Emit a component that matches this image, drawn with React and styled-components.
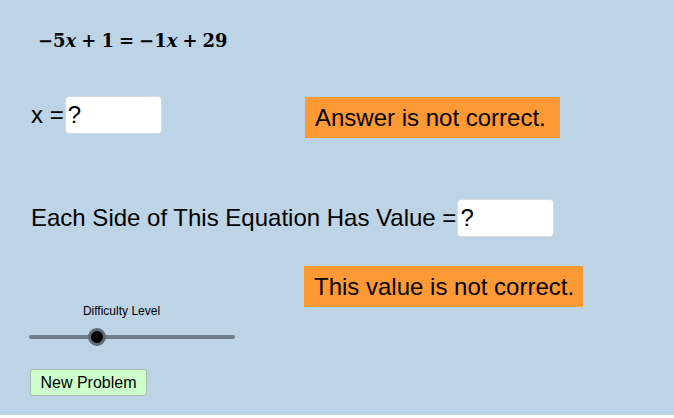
import React from 'react'
import styled, { createGlobalStyle } from 'styled-components'

const Global = createGlobalStyle`
  body {
    margin: 0;
    background: #fff;
    font-family: 'Liberation Sans', Arial, sans-serif;
  }
`

const Board = styled.div`
  width: 674px;
  height: 415px;
  box-sizing: border-box;
  background: #bdd3e6;
  padding: 30px 0 0 29px;
  color: #000;
  overflow: hidden;
`

const Equation = styled.div`
  font-family: 'DejaVu Serif', 'Liberation Serif', serif;
  font-weight: bold;
  font-size: 18px;
  height: 22px;
  line-height: 22px;
  margin-left: 9px;
  i {
    font-style: italic;
  }
  .op {
    margin: 0 5px;
  }
`

const Row = styled.div`
  display: flex;
  align-items: flex-start;
  margin-top: ${p => p.top}px;
  font-size: 24px;
`

const Label = styled.span`
  margin-left: 2px;
  width: ${p => (p.w ? p.w + 'px' : 'auto')};
  height: 38px;
  display: flex;
  align-items: center;
  white-space: nowrap;
`

const Field = styled.div`
  width: 97px;
  height: 38px;
  box-sizing: border-box;
  background: #fff;
  border: 1px solid #d3dbe3;
  border-radius: 4px;
  padding-left: 2px;
  display: flex;
  align-items: center;
  margin-left: 1px;
`

const Feedback = styled.div`
  background: #ff9933;
  width: ${p => p.w}px;
  height: 41px;
  box-sizing: border-box;
  padding: 0 0 0 10px;
  display: flex;
  align-items: center;
  white-space: nowrap;
  margin-top: ${p => p.drop || 0}px;
  margin-left: ${p => p.left || 0}px;
  font-size: 24px;
`

const SliderBox = styled.div`
  margin-top: ${p => p.top}px;
  width: 206px;
`

const SliderLabel = styled.div`
  font-size: 12px;
  line-height: 13px;
  text-align: center;
  width: 185px;
`

const Track = styled.div`
  position: relative;
  margin-top: 17px;
  height: 4px;
  border-radius: 2px;
  background: #6e7d89;
`

const Thumb = styled.div`
  position: absolute;
  top: 50%;
  width: 12px;
  height: 12px;
  border-radius: 50%;
  background: #000;
  border: 3px solid #5e6a74;
  transform: translate(-50%, -50%);
`

const Button = styled.button`
  display: block;
  margin-top: 30px;
  margin-left: 1px;
  width: 117px;
  height: 27px;
  background: #ccffcc;
  border: 1px solid #a7b9a7;
  border-radius: 3px;
  font-family: 'Liberation Sans', Arial, sans-serif;
  font-size: 16px;
  color: #000;
  padding: 0;
`

export default function App() {
  const level = 0.33
  return (
    <>
      <Global />
      <Board>
        <Equation>
          −5<i>x</i><span className="op">+</span>1<span className="op">=</span>−1<i>x</i>
          <span className="op">+</span>29
        </Equation>
        <Row top={44}>
          <Label w={274}>
            x =<Field>?</Field>
          </Label>
          <Feedback w={255} drop={1}>Answer is not correct.</Feedback>
        </Row>
        <Row top={61}>
          <Label>
            Each Side of This Equation Has Value =<Field>?</Field>
          </Label>
        </Row>
        <Row top={29}>
          <Feedback w={279} left={275}>This value is not correct.</Feedback>
        </Row>
        <SliderBox top={-2}>
          <SliderLabel>Difficulty Level</SliderLabel>
          <Track>
            <Thumb style={{ left: `${level * 100}%` }} />
          </Track>
        </SliderBox>
        <Button>New Problem</Button>
      </Board>
    </>
  )
}
